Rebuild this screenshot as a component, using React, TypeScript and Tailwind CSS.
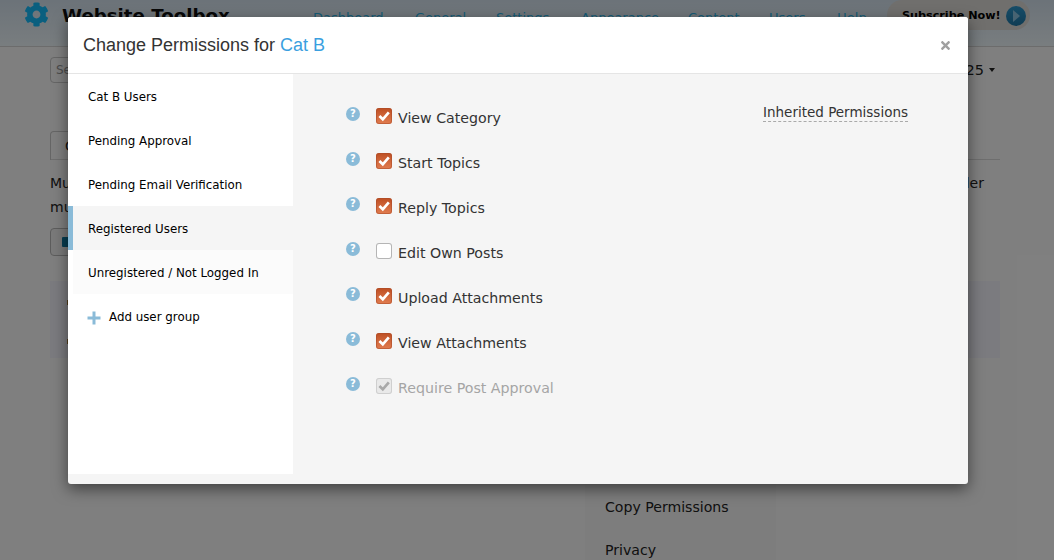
import React from "react";
import { FaCog, FaTimes } from "react-icons/fa";

const groups = ["Cat B Users", "Pending Approval", "Pending Email Verification", "Registered Users", "Unregistered / Not Logged In"];

const permissions = [
  { label: "View Category", state: "on" },
  { label: "Start Topics", state: "on" },
  { label: "Reply Topics", state: "on" },
  { label: "Edit Own Posts", state: "off" },
  { label: "Upload Attachments", state: "on" },
  { label: "View Attachments", state: "on" },
  { label: "Require Post Approval", state: "locked" },
];

const navLinks = [
  { label: "Dashboard", width: "w-[102px]" },
  { label: "General", width: "w-[81px]" },
  { label: "Settings", width: "w-[85px]" },
  { label: "Appearance", width: "w-[107px]" },
  { label: "Content", width: "w-[81px]" },
  { label: "Users", width: "w-[68px]" },
  { label: "Help", width: "w-[50px]" },
];

const Check = ({ color }: { color: string }) => (
  <svg viewBox="0 0 16 16" className="block h-4 w-4">
    <path d="M3.4 8 6.8 11.3 12.8 4.4" fill="none" stroke={color} strokeWidth="2.7" />
  </svg>
);

const Box = ({ state }: { state: string }) => {
  if (state === "on") {
    return (
      <span className="block h-4 w-4 rounded-[3px] bg-gradient-to-b from-[#bd4e22] to-[#e27d50] shadow-[inset_0_0_0_1px_rgba(170,75,40,0.55)]">
        <Check color="#ffffff" />
      </span>
    );
  }
  if (state === "locked") {
    return (
      <span className="block h-4 w-4 rounded-[3px] bg-[#e9e9e9] shadow-[inset_0_0_0_1px_#cfcfcf]">
        <Check color="#a9a9a9" />
      </span>
    );
  }
  return <span className="block h-4 w-4 rounded-[3px] bg-white shadow-[inset_0_0_0_1px_#b5b5b5]" />;
};

const App = () => {
  return (
    <div className="relative h-[560px] w-full overflow-hidden bg-white font-['DejaVu_Sans',sans-serif] text-[#222]">
      <header className="flex h-[47px] items-start border-b border-[#d8d8d8] bg-gradient-to-b from-[#d8e6f2] to-[#f2fbff]">
        <FaCog className="ml-6 mt-[2px] h-[25px] w-[25px] text-[#14bfff]" />
        <span className="ml-[13px] mt-[1px] w-[251px] text-[18.2px] font-bold leading-[30px] text-[#111]">Website Toolbox</span>
        <nav className="flex text-[13px] leading-[36px] text-[#2ab8ee]">
          {navLinks.map((link) => (
            <span key={link.label} className={link.width}>
              {link.label}
            </span>
          ))}
        </nav>
        <div className="flex h-[30px] w-[143px] items-center rounded-full bg-[#e0dedb] pl-[15px]">
          <span className="mt-[2px] text-[11.2px] font-bold text-black">Subscribe Now!</span>
          <span className="ml-[5px] mt-[1px] flex h-5 w-5 items-center justify-center rounded-full bg-gradient-to-b from-[#2f9ad0] to-[#1f78a8]">
            <span className="ml-[2px] h-0 w-0 border-y-[6px] border-l-[7px] border-y-transparent border-l-[#8fc6e4]" />
          </span>
        </div>
      </header>

      <main className="pl-[50px] pr-[54px]">
        <div className="mt-[10px] flex h-[26px] items-start justify-between">
          <div className="h-[26px] w-[180px] rounded border border-[#ccc] pl-[5px] text-[12px] leading-[24px] text-[#999]">Search</div>
          <span className="mr-[5px] flex items-center text-[14.5px] leading-[26px]">
            25
            <span className="ml-[5px] h-0 w-0 border-x-[3px] border-t-[4px] border-x-transparent border-t-[#222]" />
          </span>
        </div>
        <div className="mt-[48px] h-[29px] w-full border-b border-[#ddd]">
          <div className="h-[29px] w-[120px] rounded-t border border-b-0 border-[#ccc] pl-[14px] text-[14px] leading-[28px]">G</div>
        </div>
        <div className="mt-[11px] flex justify-between pr-4 text-[14px] leading-[24px]">
          <span>Mu</span>
          <span>der</span>
        </div>
        <p className="text-[14px] leading-[24px]">mu</p>
        <div className="mt-[9px] flex h-[28px] w-[110px] items-center rounded border border-[#bbb] bg-[#f5f5f5] pl-[11px]">
          <span className="h-[10px] w-[8px] rounded-[1px] bg-[#0a7ba5]" />
        </div>
        <div className="mt-[25px] flex h-[77px] w-full flex-col gap-[34px] bg-[#f6f7ff] pl-[17px] pt-[19px]">
          <span className="h-[5px] w-[2px] bg-[#a87a30]" />
          <span className="h-[5px] w-[2px] bg-[#a87a30]" />
        </div>
      </main>

      <aside className="absolute left-[585px] top-[470px] h-[90px] w-[191px] bg-[#fafafa] pl-5 pt-[25px] text-[14.1px] text-[#222]">
        <p className="leading-[24px]">Copy Permissions</p>
        <p className="mt-[19px] leading-[24px]">Privacy</p>
      </aside>

      <div className="absolute inset-0 bg-black/50" />

      <section className="absolute left-[68px] top-[17px] flex h-[467px] w-[900px] flex-col overflow-hidden rounded-[3px] bg-[#f5f5f5] shadow-[0_5px_15px_rgba(0,0,0,0.5)]">
        <div className="flex h-[57px] shrink-0 items-center justify-between border-b border-[#e5e5e5] bg-white px-[15px]">
          <h2 className="font-['Liberation_Sans',sans-serif] text-[18px] font-normal text-[#333]">
            Change Permissions for <span className="text-[#3a9fdf]">Cat B</span>
          </h2>
          <FaTimes className="mr-[2px] h-[13px] w-[11px] text-[#a0a0a0]" />
        </div>
        <div className="flex min-h-0 flex-1">
          <div className="mb-[10px] w-[225px] shrink-0 bg-white text-[11.85px] text-black">
            {groups.map((group) => (
              <div
                key={group}
                className={
                  group === "Registered Users"
                    ? "h-11 border-l-[5px] border-[#8abbd8] bg-[#f5f5f5] pl-[15px] leading-[46px]"
                    : group.startsWith("Unregistered")
                      ? "ml-[5px] h-11 bg-[#fbfbfb] pl-[15px] leading-[46px]"
                      : "h-11 pl-5 leading-[46px]"
                }
              >
                {group}
              </div>
            ))}
            <div className="flex h-11 items-center pl-[19px] pt-[4px]">
              <svg viewBox="0 0 14 14" className="h-[14px] w-[14px]">
                <path d="M7 0.5V13.5M0.5 7H13.5" stroke="#8abbd8" strokeWidth="3" />
              </svg>
              <span className="ml-2">Add user group</span>
            </div>
          </div>
          <div className="flex flex-1 items-start justify-between pl-[53px] pr-[60px] pt-[22px]">
            <ul className="flex flex-col">
              {permissions.map((item) => (
                <li key={item.label} className="flex h-[45px] items-start">
                  <span className="mt-[11px] flex h-[14px] w-[14px] items-center justify-center rounded-full bg-[#8abbd8] text-[10px] font-bold leading-none text-white">?</span>
                  <span className="ml-4 mt-[12px] block">
                    <Box state={item.state} />
                  </span>
                  <span className={`ml-[6px] mt-[11px] text-[14.2px] leading-[22px] ${item.state === "locked" ? "text-[#a5a5a5]" : "text-[#333]"}`}>
                    {item.label}
                  </span>
                </li>
              ))}
            </ul>
            <span className="mt-[10px] border-b border-dashed border-[#aaa] pb-[3px] text-[13.5px] leading-[12px] text-[#333]">Inherited Permissions</span>
          </div>
        </div>
      </section>
    </div>
  );
};

export default App;
